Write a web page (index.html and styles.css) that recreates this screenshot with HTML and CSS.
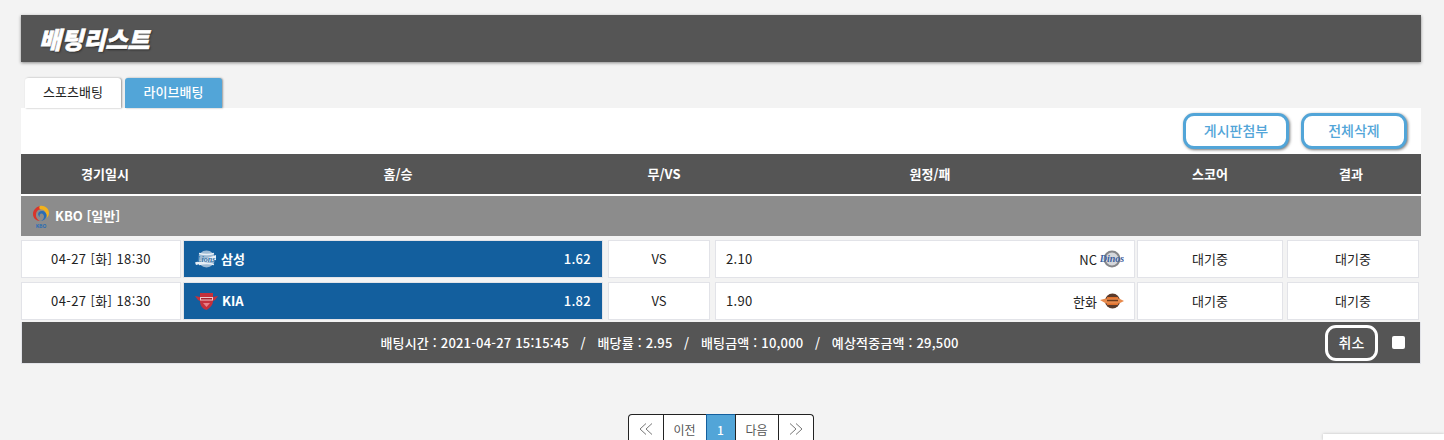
FILE: index.html
```html
<!DOCTYPE html>
<html lang="ko">
<head>
<meta charset="utf-8">
<title>배팅리스트</title>
<link rel="stylesheet" href="styles.css">
</head>
<body>

<div class="wrap">
    <div class="title-bar"><h1 class="title">배팅리스트</h1></div>

    <div class="tabs">
        <div class="tab tab-on">스포츠배팅</div>
        <div class="tab tab-live">라이브배팅</div>
    </div>

    <div class="tools">
        <div class="tool-btn">게시판첨부</div>
        <div class="tool-btn">전체삭제</div>
    </div>

    <div class="head-row">
        <div>경기일시</div>
        <div>홈/승</div>
        <div>무/VS</div>
        <div>원정/패</div>
        <div>스코어</div>
        <div>결과</div>
    </div>

    <div class="league">
        <svg class="league-logo" width="18" height="23" viewBox="0 0 18 23">
            <path d="M8 1c4-1 9 2 9 7 0 2-1 4-2.500 5 1-3.500-1-8-5-8.500C8 4 6.500 4 5 5c.5-2 1.500-3.500 3-4z" fill="#f2b21c"/>
            <path d="M8 1C4 2 1 5 1 9c0 4 3 7 7 7-3-1.500-4.500-4-4-7 .3-2.500 2-4.500 4.500-4.500C7 3.500 7 2 8 1z" fill="#d9352b"/>
            <path d="M14.500 11c-.5 3-3.500 5-6.500 5 2 0 4-2 4-4.500 0-1.500-1-3-2.500-3S7 10 8 12C6 11 5.500 8.500 7 7c3-2.500 8 0 7.500 4z" fill="#2a6db5"/>
            <text class="kbo-mark" x="9" y="22.500" text-anchor="middle">KBO</text>
        </svg>
        <span>KBO [일반]</span>
    </div>

    <div class="bet-row">
        <div class="cell c-date">04-27 [화] 18:30</div>
        <div class="cell c-home">
            <svg class="team-logo" width="22" height="18" viewBox="0 0 22 18">
                <circle cx="11.500" cy="9" r="8.500" fill="#9dbad4"/>
                <path d="M4 3.500q8 2 15 0M4 14.500q8-2 15 0" fill="none" stroke="#e8eff6" stroke-width="1.500"/>
                <path d="M0 12.500L21 5v5L1 15z" fill="#e8eff6"/>
                <text class="logo-word logo-lions" x="11" y="12">Lions</text>
            </svg>
            <span class="team">삼성</span>
            <span class="odds">1.62</span>
        </div>
        <div class="cell c-vs">VS</div>
        <div class="cell c-away">
            <span class="away-odds">2.10</span>
            <span class="away-team">NC
                <svg class="team-logo" width="24" height="18" viewBox="0 0 24 18">
                    <circle cx="12" cy="9" r="7.500" fill="#d5d7db" stroke="#85868a" stroke-width="2"/>
                    <text class="logo-word logo-dinos" x="12" y="12">Dinos</text>
                </svg>
            </span>
        </div>
        <div class="cell c-score">대기중</div>
        <div class="cell c-result">대기중</div>
    </div>

    <div class="bet-row">
        <div class="cell c-date">04-27 [화] 18:30</div>
        <div class="cell c-home">
            <svg class="team-logo" width="23" height="20" viewBox="0 0 23 20">
                <path d="M0 5l5 1V2h13v4l5-1-3 4-2 1c0 4-3 7-6.500 9C8 18 5 15 5 10L3 9z" fill="#c5303b"/>
                <path d="M5 6h13v3.500H5z" fill="#f0c4c6"/>
                <path d="M6 7h11v1.500H6z" fill="#a8212d"/>
                <path d="M8 12h7l-3.500 4z" fill="#e88088"/>
            </svg>
            <span class="team">KIA</span>
            <span class="odds">1.82</span>
        </div>
        <div class="cell c-vs">VS</div>
        <div class="cell c-away">
            <span class="away-odds">1.90</span>
            <span class="away-team">한화
                <svg class="team-logo" width="24" height="18" viewBox="0 0 24 18">
                    <circle cx="12.500" cy="9" r="7.500" fill="#5a3a2a"/>
                    <path d="M7 5h11v8H7z" fill="#e0702c"/>
                    <path d="M0 8l6-1.500h13l5 2.500-5 2.500H6z" fill="#e88a4c"/>
                    <path d="M7 8.500h11" stroke="#6a3a1c" stroke-width="1.500"/>
                </svg>
            </span>
        </div>
        <div class="cell c-score">대기중</div>
        <div class="cell c-result">대기중</div>
    </div>

    <div class="foot-row">
        <div class="foot-info">
            배팅시간 : 2021-04-27 15:15:45 &nbsp;&nbsp;/&nbsp;&nbsp; 배당률 : 2.95 &nbsp;&nbsp;/&nbsp;&nbsp; 배팅금액 : 10,000 &nbsp;&nbsp;/&nbsp;&nbsp; 예상적중금액 : 29,500
        </div>
        <div class="cancel-btn">취소</div>
        <div class="check"></div>
    </div>

    <div class="paging">
        <div class="page page-arrow">
            <svg width="14" height="12" viewBox="0 0 14 12"><path d="M7 0.500L1 6l6 5.500M13 0.500L7 6l6 5.500" fill="none" stroke="#777"/></svg>
        </div>
        <div class="page page-text">이전</div>
        <div class="page page-on">1</div>
        <div class="page page-text">다음</div>
        <div class="page page-arrow">
            <svg width="14" height="12" viewBox="0 0 14 12"><path d="M1 0.500L7 6l-6 5.500M7 0.500L13 6l-6 5.500" fill="none" stroke="#777"/></svg>
        </div>
    </div>
</div>

<div class="corner-box"></div>

</body>
</html>
```

FILE: styles.css
```css
html, body {
    margin: 0;
    height: 440px;
    overflow: hidden;
}
body {
    background: #f3f3f3;
    font-family: "Noto Sans CJK KR", "Open Sans", sans-serif;
    font-size: 13px;
    color: #222;
}
.wrap {
    width: 1400px;
    margin-left: 21px;
    padding-top: 15px;
}
.title-bar {
    height: 47px;
    background: #555;
    box-shadow: 0 1px 3px #888;
    display: flex;
    align-items: center;
    padding-left: 18px;
}
.title {
    margin: 0;
    color: #fff;
    font-size: 24px;
    line-height: 44px;
    font-weight: 900;
    font-style: italic;
    letter-spacing: 0;
    -webkit-text-stroke: 0.6px #fff;
    text-shadow: 1px 1px 2px #222;
}
.tabs {
    display: flex;
    gap: 4px;
    height: 30px;
    margin-top: 16px;
    padding-left: 4px;
}
.tab {
    width: 96px;
    height: 30px;
    line-height: 28px;
    text-align: center;
    border-radius: 3px 3px 0 0;
    box-shadow: 1px 0 2px #999;
}
.tab-on {
    background: #fff;
    color: #222;
}
.tab-live {
    width: 97px;
    background: #52a5d8;
    color: #fff;
    font-weight: 500;
}
.tools {
    height: 46px;
    background: #fff;
    display: flex;
    justify-content: flex-end;
    align-items: flex-start;
    gap: 12px;
    padding: 5px 14px 0 0;
    box-sizing: border-box;
}
.tool-btn {
    width: 106px;
    height: 36px;
    line-height: 28px;
    text-align: center;
    box-sizing: border-box;
    background: #fff;
    border: 3px solid #52a5d8;
    border-radius: 11px;
    color: #52a5d8;
    font-size: 14px;
    font-weight: 500;
    box-shadow: 1px 1px 3px #777;
}
.head-row {
    height: 42px;
    background: #555;
    color: #fff;
    font-weight: 700;
    display: grid;
    grid-template-columns: 168px 418px 114px 418px 142px 140px;
    align-items: center;
    text-align: center;
    border-bottom: 2px solid #fff;
    box-sizing: border-box;
    padding-bottom: 2px;
}
.league {
    height: 40px;
    background: #8c8c8c;
    color: #fff;
    font-weight: 700;
    display: flex;
    align-items: center;
    gap: 5px;
    padding-left: 11px;
}
.league span {
    padding-bottom: 2px;
}
.kbo-mark {
    font-size: 5px;
    font-weight: 700;
    fill: #2a6db5;
}
.bet-row {
    display: flex;
    margin-top: 4px;
    height: 38px;
}
.cell {
    background: #fff;
    border: 1px solid #e2e3e8;
    box-sizing: border-box;
    height: 38px;
    display: flex;
    align-items: center;
    justify-content: center;
    padding-bottom: 2px;
}
.c-date {
    width: 160px;
    margin-right: 2px;
    letter-spacing: 0.4px;
}
.c-home {
    width: 420px;
    margin-right: 5px;
    background: #135f9e;
    color: #fff;
    justify-content: flex-start;
    padding: 0 11px 0;
    gap: 4px;
    font-weight: 500;
}
.team {
    font-weight: 700;
    padding-bottom: 2px;
}
.odds {
    margin-left: auto;
    padding-bottom: 2px;
    letter-spacing: 0.3px;
}
.c-vs {
    width: 102px;
    margin-right: 5px;
}
.c-away {
    width: 420px;
    margin-right: 2px;
    justify-content: space-between;
    padding: 0 10px 0;
}
.away-odds {
    letter-spacing: 0.3px;
    padding-bottom: 2px;
}
.away-team {
    display: flex;
    align-items: center;
    gap: 3px;
}
.c-score {
    width: 146px;
    margin-right: 4px;
}
.c-result {
    width: 132px;
}
.logo-word {
    font-family: "Liberation Serif", serif;
    font-style: italic;
    font-weight: 700;
    text-anchor: middle;
}
.logo-lions {
    font-size: 8px;
    fill: #2d6da3;
}
.logo-dinos {
    font-size: 10px;
    fill: #3c5f9e;
}
.foot-row {
    height: 42px;
    margin-top: 2px;
    background: #555;
    color: #fff;
    font-weight: 500;
    letter-spacing: 0.2px;
    display: flex;
    align-items: center;
    border: 1px solid #e2e3e8;
    border-top: 0;
    box-sizing: border-box;
}
.foot-info {
    width: 1295px;
    text-align: center;
    box-sizing: border-box;
}
.cancel-btn {
    width: 53px;
    height: 36px;
    line-height: 28px;
    margin-left: 8px;
    box-sizing: border-box;
    text-align: center;
    border: 3px solid #fff;
    border-radius: 11px;
    color: #fff;
    font-size: 14px;
}
.check {
    width: 13px;
    height: 13px;
    margin-left: 14px;
    background: #fff;
    border-radius: 2px;
}
.paging {
    display: flex;
    justify-content: center;
    margin-top: 50px;
    height: 26px;
}
.page {
    height: 26px;
    box-sizing: border-box;
    border: 1px solid #222;
    border-bottom: 0;
    margin-left: -1px;
    background: #fff;
    color: #555;
    font-size: 12px;
    display: flex;
    align-items: flex-start;
    justify-content: center;
    padding-top: 8px;
    line-height: 14px;
}
.page-arrow {
    width: 36px;
}
.page:first-child {
    border-top-left-radius: 4px;
}
.page:last-child {
    border-top-right-radius: 4px;
}
.page-text {
    width: 44px;
}
.page-on {
    width: 30px;
    background: #52a5d8;
    color: #fff;
    border-color: #135f9e;
    font-weight: 500;
}
.team-logo {
    display: block;
    flex: none;
}
.corner-box {
    position: absolute;
    left: 1323px;
    top: 434px;
    width: 121px;
    height: 6px;
    background: #fff;
    box-shadow: 0 0 3px #bbb;
}
```
